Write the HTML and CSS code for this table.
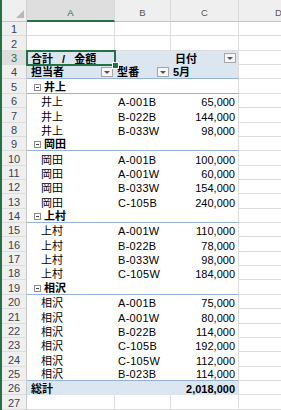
FILE: index.html
```html
<!DOCTYPE html>
<html lang="ja">
<head>
<meta charset="utf-8">
<link rel="stylesheet" href="styles.css">
</head>
<body>
<div class="sheet">
  <div class="r hdr">
    <div class="corner"><span class="tri"></span></div>
    <div class="ch sel">A</div>
    <div class="ch">B</div>
    <div class="ch">C</div>
    <div class="ch">D</div>
  </div>
  <div class="r"><div class="h">1</div><div class="g"></div><div class="g"></div><div class="g"></div><div class="g"></div></div>
  <div class="r"><div class="h">2</div><div class="g"></div><div class="g"></div><div class="g"></div><div class="g"></div></div>
  <div class="r head1"><div class="h sel">3</div><div class="p a cur"><span class="ttl">合計 / 金額</span></div><div class="p b"></div><div class="p c"><span class="lbl">日付</span><span class="fb"></span></div><div class="g"></div></div>
  <div class="r head2"><div class="h">4</div><div class="p a">担当者<span class="fb"></span></div><div class="p b">型番<span class="fb"></span></div><div class="p c">5月</div><div class="g"></div></div>

  <div class="r grp"><div class="h">5</div><div class="p a"><span class="mi"></span>井上</div><div class="p b"></div><div class="p c"></div><div class="g"></div></div>
  <div class="r"><div class="h">6</div><div class="p a">井上</div><div class="p b">A-001B</div><div class="p c">65,000</div><div class="g"></div></div>
  <div class="r"><div class="h">7</div><div class="p a">井上</div><div class="p b">B-022B</div><div class="p c">144,000</div><div class="g"></div></div>
  <div class="r"><div class="h">8</div><div class="p a">井上</div><div class="p b">B-033W</div><div class="p c">98,000</div><div class="g"></div></div>

  <div class="r grp"><div class="h">9</div><div class="p a"><span class="mi"></span>岡田</div><div class="p b"></div><div class="p c"></div><div class="g"></div></div>
  <div class="r"><div class="h">10</div><div class="p a">岡田</div><div class="p b">A-001B</div><div class="p c">100,000</div><div class="g"></div></div>
  <div class="r"><div class="h">11</div><div class="p a">岡田</div><div class="p b">A-001W</div><div class="p c">60,000</div><div class="g"></div></div>
  <div class="r"><div class="h">12</div><div class="p a">岡田</div><div class="p b">B-033W</div><div class="p c">154,000</div><div class="g"></div></div>
  <div class="r"><div class="h">13</div><div class="p a">岡田</div><div class="p b">C-105B</div><div class="p c">240,000</div><div class="g"></div></div>

  <div class="r grp"><div class="h">14</div><div class="p a"><span class="mi"></span>上村</div><div class="p b"></div><div class="p c"></div><div class="g"></div></div>
  <div class="r"><div class="h">15</div><div class="p a">上村</div><div class="p b">A-001W</div><div class="p c">110,000</div><div class="g"></div></div>
  <div class="r"><div class="h">16</div><div class="p a">上村</div><div class="p b">B-022B</div><div class="p c">78,000</div><div class="g"></div></div>
  <div class="r"><div class="h">17</div><div class="p a">上村</div><div class="p b">B-033W</div><div class="p c">98,000</div><div class="g"></div></div>
  <div class="r"><div class="h">18</div><div class="p a">上村</div><div class="p b">C-105W</div><div class="p c">184,000</div><div class="g"></div></div>

  <div class="r grp"><div class="h">19</div><div class="p a"><span class="mi"></span>相沢</div><div class="p b"></div><div class="p c"></div><div class="g"></div></div>
  <div class="r"><div class="h">20</div><div class="p a">相沢</div><div class="p b">A-001B</div><div class="p c">75,000</div><div class="g"></div></div>
  <div class="r"><div class="h">21</div><div class="p a">相沢</div><div class="p b">A-001W</div><div class="p c">80,000</div><div class="g"></div></div>
  <div class="r"><div class="h">22</div><div class="p a">相沢</div><div class="p b">B-022B</div><div class="p c">114,000</div><div class="g"></div></div>
  <div class="r"><div class="h">23</div><div class="p a">相沢</div><div class="p b">C-105B</div><div class="p c">192,000</div><div class="g"></div></div>
  <div class="r"><div class="h">24</div><div class="p a">相沢</div><div class="p b">C-105W</div><div class="p c">112,000</div><div class="g"></div></div>
  <div class="r last"><div class="h">25</div><div class="p a">相沢</div><div class="p b">B-023B</div><div class="p c">114,000</div><div class="g"></div></div>

  <div class="r tot"><div class="h">26</div><div class="p a">総計</div><div class="p b"></div><div class="p c">2,018,000</div><div class="g"></div></div>
  <div class="r"><div class="h">27</div><div class="g"></div><div class="g"></div><div class="g"></div><div class="g"></div></div>
</div>
</body>
</html>
```

FILE: styles.css
```css
html, body {
  margin: 0;
  padding: 0;
  background: #ffffff;
}
body {
  width: 281px;
  height: 410px;
  overflow: hidden;
  font-family: "Liberation Sans", "Noto Sans CJK JP", sans-serif;
  font-size: 11px;
  color: #000;
}
.sheet {
  border-left: 2px solid #217346;
  height: 410px;
  overflow: hidden;
}
.r {
  display: grid;
  grid-template-columns: 25px 88px 56px 68px 80px;
  height: 14.37px;
}
.r > div {
  box-sizing: border-box;
  overflow: hidden;
  white-space: nowrap;
  display: flex;
  align-items: flex-end;
  line-height: 11px;
}
.hdr {
  height: 22px;
}
.corner {
  background: #efefef;
  border-right: 1px solid #d0d0d0;
  border-bottom: 1px solid #c4c4c4;
  position: relative;
}
.tri {
  position: absolute;
  right: 2px;
  bottom: 3px;
  width: 0;
  height: 0;
  border-left: 8px solid transparent;
  border-bottom: 8px solid #b8b8b8;
}
.ch {
  justify-content: center;
  padding-bottom: 3px;
  background: #efefef;
  border-right: 1px solid #d8d8d8;
  border-bottom: 1px solid #c4c4c4;
  color: #555;
  font-size: 9.5px;
}
.r > .ch {
  line-height: 10px;
}
.ch.sel {
  background: #dedede;
  color: #217346;
  border-bottom: 2px solid #217346;
  padding-bottom: 2px;
}
.h {
  justify-content: center;
  background: #efefef;
  border-right: 1px solid #c8c8c8;
  border-bottom: 1px solid #dcdcdc;
  color: #3b4450;
}
.h.sel {
  background: #dedede;
  color: #217346;
}
.g {
  border-right: 1px solid #dcdcdc;
  border-bottom: 1px solid #dcdcdc;
}
.p.a {
  padding-left: 14px;
}
.p.b {
  padding-left: 3px;
  letter-spacing: 0.3px;
}
.p.c {
  border-right: 1px solid #dcdcdc;
  justify-content: flex-end;
  padding-right: 3px;
}
.head1 .p,
.head2 .p {
  background: #dce6f1;
  font-weight: bold;
}
.head1 .p.a,
.head2 .p.a {
  padding-left: 4px;
}
.ttl {
  word-spacing: 6px;
}
.head2 .p.b {
  padding-left: 2px;
}
.head1 .p.c {
  padding-left: 4px;
  padding-right: 0;
  justify-content: flex-start;
}
.head2 .p.c {
  padding-left: 2px;
  justify-content: flex-start;
}
.head2 .p {
  border-bottom: 1px solid #95b3d7;
}
.r > .cur {
  overflow: visible;
  position: relative;
  z-index: 2;
  outline: 2px solid #217346;
  outline-offset: -1px;
}
.cur::after {
  content: "";
  position: absolute;
  right: -4px;
  bottom: -4px;
  width: 5px;
  height: 5px;
  background: #217346;
  border: 1px solid #ffffff;
}
.fb {
  box-sizing: border-box;
  width: 12px;
  height: 10px;
  margin-left: auto;
  margin-right: 2px;
  margin-bottom: 1px;
  border: 1px solid #a6a6a6;
  background: #f6f6f6;
  display: flex;
  align-items: center;
  justify-content: center;
}
.fb::before {
  content: "";
  width: 0;
  height: 0;
  border-left: 3px solid transparent;
  border-right: 3px solid transparent;
  border-top: 3px solid #555;
}
.head1 .fb {
  margin-bottom: 2px;
}
.grp .p {
  font-weight: bold;
  border-bottom: 1px solid #95b3d7;
}
.grp .p.a {
  padding-left: 7px;
}
.mi {
  box-sizing: border-box;
  width: 7px;
  height: 7px;
  margin-right: 3px;
  margin-bottom: 2px;
  border: 1px solid #8c8c8c;
  background: #ffffff linear-gradient(#444, #444) center / 3px 1px no-repeat;
}
.last .p {
  border-bottom: 1px solid #95b3d7;
}
.tot .p {
  background: #dce6f1;
  font-weight: bold;
}
.tot .p.a {
  padding-left: 4px;
}
```
